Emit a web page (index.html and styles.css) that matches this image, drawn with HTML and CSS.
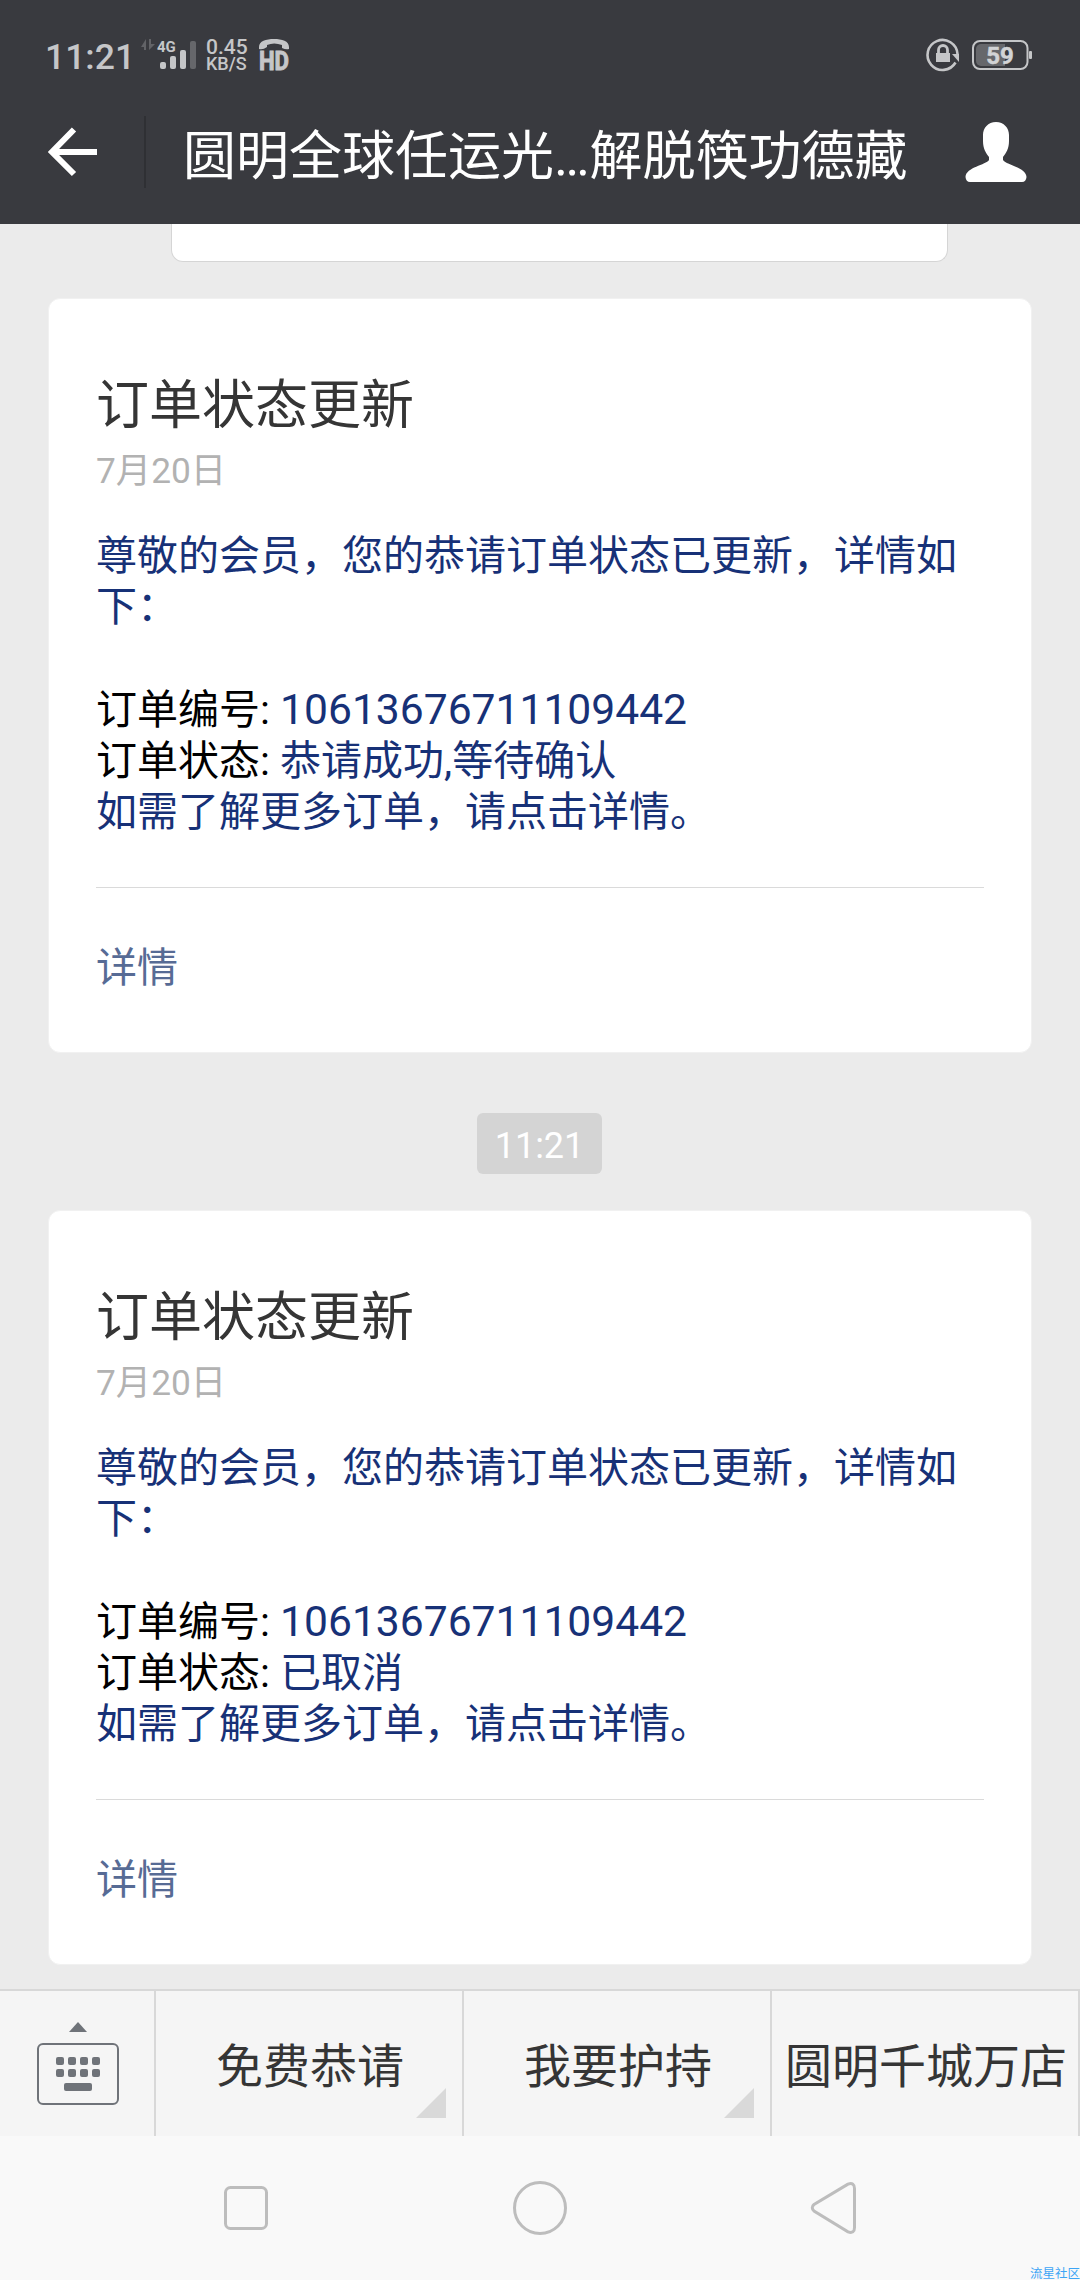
FILE: index.html
```html
<!DOCTYPE html>
<html lang="zh-CN">
<head>
    <meta charset="UTF-8">
    <meta name="viewport" content="width=device-width, initial-scale=1.0">
    <title>订单状态更新</title>
    <link rel="stylesheet" href="styles.css">
</head>
<body>
    <header class="header">
        <div class="status-bar">
            <span class="clock">11:21</span>
            <svg class="signal" width="57" height="34" viewBox="0 0 57 34">
                <path d="M1 9L6 1V12H4V9ZM9 1H11V6H15L9 12Z" fill="#626367"/>
                <text x="17" y="14" class="net-type">4G</text>
                <rect x="20" y="24" width="6" height="7" rx="2" fill="#c5c6c8"/>
                <rect x="30" y="18" width="6" height="13" rx="2" fill="#c5c6c8"/>
                <rect x="40" y="12" width="6" height="19" rx="2" fill="#c5c6c8"/>
                <rect x="50" y="3" width="6" height="28" rx="2" fill="#66676b"/>
            </svg>
            <div class="speed">
                <span class="speed-value">0.45</span>
                <span class="speed-unit">KB/S</span>
            </div>
            <svg class="volte" width="32" height="42" viewBox="0 0 32 42">
                <path d="M1 9C1 3 8 1 16 1S31 3 31 9V11Q28 12 24 10V7Q16 4 9 7V9Q5 12 1 11Z" fill="#c5c6c8"/>
                <text x="1" y="31.500" class="hd" textLength="30" lengthAdjust="spacingAndGlyphs">HD</text>
            </svg>
            <svg class="rotation-lock" width="34" height="34" viewBox="0 0 34 34">
                <path d="M29.500 24.500A15 15 0 1 1 31.500 16" fill="none" stroke="#c5c6c8" stroke-width="2.600"/>
                <path d="M26 16H33V24Z" fill="#c5c6c8"/>
                <rect x="10" y="15" width="14" height="9" fill="#c5c6c8"/>
                <path d="M12.500 15V12a4.500 4.500 0 0 1 9 0V15" fill="none" stroke="#c5c6c8" stroke-width="2.800"/>
            </svg>
            <svg class="battery" width="62" height="32" viewBox="0 0 62 32">
                <rect x="1" y="2" width="54.500" height="28" rx="7" fill="none" stroke="#c5c6c8" stroke-width="2"/>
                <path d="M33 5V27H9a5 5 0 0 1-5-5V10a5 5 0 0 1 5-5Z" fill="#66676b"/>
                <rect x="57" y="12" width="3" height="8" rx="1" fill="#c5c6c8"/>
                <text x="28" y="24.500" text-anchor="middle" class="battery-level">59</text>
            </svg>
        </div>
        <div class="title-bar">
            <svg class="back" width="50" height="50" viewBox="0 0 50 50">
                <path d="M26 2.500L4 25L26 47M4 25H49" fill="none" stroke="#fff" stroke-width="6"/>
            </svg>
            <div class="title-divider"></div>
            <h1 class="title">圆明全球任运光…解脱筷功德藏</h1>
            <svg class="profile" width="62" height="60" viewBox="0 0 62 60">
                <path d="M31 0C39 0 44 6 44 13V19C44 27 41 31 38 35V38C41 43 61 45 61.500 55Q61 60 57 60H5Q1 60 .5 55C1 45 21 43 24 38V35C21 31 18 27 18 19V13C18 6 23 0 31 0Z" fill="#fff"/>
            </svg>
        </div>
    </header>

    <main class="chat">
        <div class="previous-message"></div>

        <section class="card">
            <h2 class="card-title">订单状态更新</h2>
            <div class="card-date">7月20日</div>
            <div class="card-body">
                <p>尊敬的会员，您的恭请订单状态已更新，详情如下：</p>
                <p><br></p>
                <p><span class="label">订单编号: </span><span class="number">10613676711109442</span></p>
                <p><span class="label">订单状态: </span>恭请成功,等待确认</p>
                <p>如需了解更多订单，请点击详情。</p>
            </div>
            <a class="card-link">详情</a>
        </section>

        <div class="time">11:21</div>

        <section class="card">
            <h2 class="card-title">订单状态更新</h2>
            <div class="card-date">7月20日</div>
            <div class="card-body">
                <p>尊敬的会员，您的恭请订单状态已更新，详情如下：</p>
                <p><br></p>
                <p><span class="label">订单编号: </span><span class="number">10613676711109442</span></p>
                <p><span class="label">订单状态: </span>已取消</p>
                <p>如需了解更多订单，请点击详情。</p>
            </div>
            <a class="card-link">详情</a>
        </section>
    </main>

    <footer class="menu">
        <div class="keyboard">
            <svg width="84" height="86" viewBox="0 0 84 86">
                <path d="M42 2L51 12H33Z" fill="#6f7379"/>
                <rect x="2" y="24" width="80" height="60" rx="5" fill="none" stroke="#6f7379" stroke-width="2"/>
                <g fill="#6f7379">
                    <rect x="20" y="37" width="8" height="8" rx="2"/>
                    <rect x="32" y="37" width="8" height="8" rx="2"/>
                    <rect x="44" y="37" width="8" height="8" rx="2"/>
                    <rect x="56" y="37" width="8" height="8" rx="2"/>
                    <rect x="20" y="49" width="8" height="8" rx="2"/>
                    <rect x="32" y="49" width="8" height="8" rx="2"/>
                    <rect x="44" y="49" width="8" height="8" rx="2"/>
                    <rect x="56" y="49" width="8" height="8" rx="2"/>
                    <rect x="28" y="63" width="28" height="8" rx="2"/>
                </g>
            </svg>
        </div>
        <div class="menu-item has-sub">免费恭请</div>
        <div class="menu-item has-sub">我要护持</div>
        <div class="menu-item">圆明千城万店</div>
    </footer>

    <nav class="nav-bar">
        <svg width="56" height="56" viewBox="0 0 56 56">
            <rect x="7.500" y="7.500" width="41" height="41" rx="5" fill="none" stroke="#bdbdbd" stroke-width="3"/>
        </svg>
        <svg width="56" height="56" viewBox="0 0 56 56">
            <circle cx="28" cy="28" r="25.500" fill="none" stroke="#bdbdbd" stroke-width="3"/>
        </svg>
        <svg width="56" height="56" viewBox="0 0 56 56">
            <path d="M42 4.100L8 24.500Q4.500 27.500 8 31L42 51.900Q48.500 54 48.500 47.500V8.500Q48.500 2 42 4.100Z" fill="none" stroke="#bdbdbd" stroke-width="3"/>
        </svg>
    </nav>
    <div class="watermark">流星社区</div>
</body>
</html>
```

FILE: styles.css
```css
* {
    box-sizing: border-box;
}
body {
    margin: 0;
    width: 1080px;
    height: 2280px;
    display: flex;
    flex-direction: column;
    overflow: hidden;
    position: relative;
    background-color: #ebebeb;
    font-family: Roboto, "Noto Sans CJK SC", sans-serif;
}
h1, h2, p {
    margin: 0;
    font-weight: 400;
}
svg {
    display: block;
    flex: none;
    overflow: visible;
}

/* Header */
.header {
    height: 224px;
    background-color: #393a3f;
    color: #fff;
}
.status-bar {
    display: flex;
    height: 112px;
    padding: 38px 46px 0 45px;
    color: #c5c6c8;
}
.clock {
    width: 95px;
    font-size: 35.5px;
    font-weight: 500;
    line-height: 38px;
}
.speed {
    display: flex;
    flex-direction: column;
    width: 52px;
    margin-left: 9px;
    font-weight: 500;
}
.speed-value {
    font-size: 21px;
    line-height: 18px;
}
.speed-unit {
    font-size: 18px;
    line-height: 15px;
}
.net-type {
    font-size: 15px;
    font-weight: 700;
    fill: #c5c6c8;
}
.hd {
    font-size: 25px;
    font-weight: 700;
    fill: #c5c6c8;
    stroke: #c5c6c8;
    stroke-width: 1px;
}
.rotation-lock {
    margin-left: auto;
}
.battery {
    margin-left: 12px;
    margin-top: 1px;
}
.battery-level {
    font-size: 24px;
    font-weight: 700;
    fill: #d2d3d5;
    stroke: #d2d3d5;
    stroke-width: 0.5px;
}
.title-bar {
    display: flex;
    align-items: flex-start;
    padding: 4px 53px 0 48px;
}
.back {
    margin-top: 11px;
}
.title-divider {
    width: 2px;
    height: 72px;
    margin-left: 46px;
    background-color: #2f3034;
}
.title {
    flex: 1;
    margin: 11px 0 0 37px;
    font-size: 53px;
    line-height: 60px;
    white-space: nowrap;
}
.profile {
    margin-top: 6px;
}

/* Messages */
.chat {
    height: 1765px;
    display: flex;
    flex-direction: column;
    align-items: center;
}
.previous-message {
    width: 777px;
    height: 38px;
    margin-right: -39px;
    border: 1px solid #d5d5d5;
    border-top: none;
    border-radius: 0 0 12px 12px;
    background-color: #fff;
}
.card {
    width: 984px;
    height: 755px;
    margin-top: 36px;
    padding: 77px 47px 0;
    border: 1px solid #f1f1f1;
    border-radius: 12px;
    background-color: #fff;
}
.card-title {
    color: #353535;
    font-size: 53px;
    line-height: 60px;
}
.card-date {
    margin-top: 14px;
    color: #b2b2b2;
    font-size: 35.3px;
    line-height: 42px;
}
.card-body {
    margin-top: 39px;
    padding-bottom: 48.8px;
    border-bottom: 1px solid #dadada;
    color: #173177;
    font-size: 41px;
    line-height: 51.2px;
}
.label {
    color: #000;
}
.number {
    font-size: 42.6px;
    line-height: 1;
}
.card-link {
    display: block;
    margin-top: 55px;
    color: #576b95;
    font-size: 41px;
    line-height: 50px;
}
.time {
    width: 125px;
    height: 61px;
    margin: 60px 1px 0 0;
    padding-top: 5px;
    border-radius: 6px;
    background-color: #d4d4d4;
    color: #fff;
    font-size: 36px;
    line-height: 57px;
    text-align: center;
}

/* Bottom menu */
.menu {
    display: flex;
    height: 147px;
    border-top: 2px solid #d8d8d8;
    background-color: #f5f5f5;
    color: #353535;
}
.keyboard {
    width: 156px;
    padding: 29px 0 0 36px;
    border-right: 2px solid #d8d8d8;
}
.menu-item {
    position: relative;
    flex: 1;
    padding: 7px 0 0 2px;
    border-right: 2px solid #d8d8d8;
    font-size: 47px;
    line-height: 137px;
    text-align: center;
    white-space: nowrap;
}
.has-sub::after {
    content: "";
    position: absolute;
    right: 16px;
    bottom: 18px;
    border-left: 30px solid transparent;
    border-bottom: 30px solid #d9d9d9;
}

/* System navigation */
.nav-bar {
    display: flex;
    flex: 1;
    justify-content: space-between;
    padding: 44px 218px 0;
    background-color: #f9f9f9;
}
.watermark {
    position: absolute;
    right: 0;
    bottom: -2px;
    color: #3da5f5;
    font-size: 12.5px;
    line-height: 16px;
}
```
